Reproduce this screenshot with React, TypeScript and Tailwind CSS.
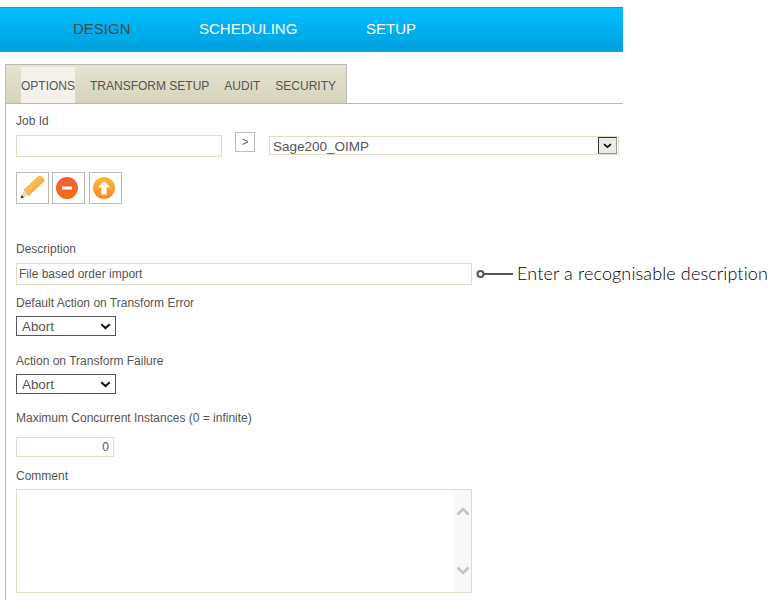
import React from 'react';

const Chevron = ({ size }: { size: number }) => (
  <svg width={size} height={size * 0.62} viewBox="0 0 13 8" className="block">
    <path d="M1.5 1.5 L6.5 6 L11.5 1.5" fill="none" stroke="#111" strokeWidth="2.4" />
  </svg>
);

const PencilIcon = () => (
  <svg width="30" height="30" viewBox="0 0 30 30">
    <defs>
      <linearGradient id="pencilBody" x1="0" y1="0" x2="1" y2="1">
        <stop offset="0" stopColor="#fdd98a" />
        <stop offset="1" stopColor="#f0981c" />
      </linearGradient>
    </defs>
    <path d="M6 17 L20.5 3.5 Q21.8 2.6 23 3.6 L25.6 6.2 Q26.6 7.4 25.6 8.6 L10.5 22.5 Z" fill="url(#pencilBody)" stroke="#ee9a22" strokeWidth="0.8" />
    <path d="M6 17 L10.5 22.5 L2.5 25.5 Z" fill="#f3dcb4" />
    <path d="M3.7 22 L6 24.2 L2.5 25.5 Z" fill="#2b2b2b" />
  </svg>
);

const MinusIcon = () => (
  <svg width="24" height="24" viewBox="0 0 24 24">
    <defs>
      <linearGradient id="minusBg" x1="0" y1="0" x2="0" y2="1">
        <stop offset="0" stopColor="#ee6040" />
        <stop offset="1" stopColor="#fc6a10" />
      </linearGradient>
    </defs>
    <circle cx="12" cy="12" r="11" fill="url(#minusBg)" />
    <rect x="7" y="10.5" width="10" height="3" fill="#fff" />
  </svg>
);

const UpIcon = () => (
  <svg width="24" height="24" viewBox="0 0 24 24">
    <defs>
      <linearGradient id="upBg" x1="0" y1="0" x2="0" y2="1">
        <stop offset="0" stopColor="#fdbb30" />
        <stop offset="1" stopColor="#f88a2c" />
      </linearGradient>
    </defs>
    <circle cx="12" cy="12" r="11" fill="url(#upBg)" />
    <path d="M12 5 L18 11.5 H14.5 V18.5 H9.5 V11.5 H6 Z" fill="#fff" />
  </svg>
);

const AbortSelect = () => (
  <div className="relative w-[100px] h-[20px]">
    <select className="block w-full h-full appearance-none border border-[#555] bg-white pl-[5px] text-[13.33px] text-[#555] outline-none">
      <option>Abort</option>
    </select>
    <div className="absolute right-[5px] top-[7px] pointer-events-none">
      <Chevron size={11} />
    </div>
  </div>
);

const Field = ({ children }: { children: React.ReactNode }) => (
  <label className="block h-[14px] leading-[14px] text-[12px] text-[#555]">{children}</label>
);

const tabs = ['TRANSFORM SETUP', 'AUDIT', 'SECURITY'];

export default function App() {
  return (
    <div className="w-[780px] h-[610px] overflow-hidden bg-white pt-[7px] font-['Liberation_Sans',Arial,sans-serif]">
      <nav className="w-[623px] h-[45px] flex items-center pl-[73px] pb-[2px] text-[15px] border-t border-[#0a9fd8] bg-gradient-to-b from-[#00bfff] to-[#009fdc]">
        <span className="w-[126px] text-[#3c4a50]">DESIGN</span>
        <span className="w-[167px] text-white">SCHEDULING</span>
        <span className="text-white">SETUP</span>
      </nav>

      <div className="h-[536px] mt-[12px] border-l border-[#b9b9b9] ml-[5px] w-[618px]">
        <div className="w-full border-b border-[#b9b9b9]">
          <div className="w-[342px] h-[39px] -ml-px flex items-end pl-[15px] border border-b-0 border-[#b9b9b9] bg-gradient-to-b from-[#e5e3d2] to-[#d6d3bd] text-[12px] text-[#555]">
            <span className="w-[54px] h-[36px] pt-[1px] flex items-center bg-[#f3f1e9] whitespace-nowrap">OPTIONS</span>
            {tabs.map((tab) => (
              <span key={tab} className="h-[36px] pt-[1px] flex items-center ml-[15px] whitespace-nowrap">{tab}</span>
            ))}
          </div>
        </div>

        <div className="pl-[10px] pt-[10px]">
          <Field>Job Id</Field>
          <div className="flex items-start mt-[7px]">
            <input className="w-[206px] h-[22px] border border-[#e0dcc6] outline-none" />
            <button className="w-[20px] h-[20px] mt-[-3px] ml-[13px] border border-[#bcbcbc] text-[12px] text-[#666] flex items-center justify-center">&gt;</button>
            <div className="relative w-[350px] h-[19px] ml-[14px] mt-[1px]">
              <select className="block w-full h-full appearance-none border border-[#e0dcc6] bg-white pl-[3px] text-[13.5px] text-[#555] outline-none">
                <option>Sage200_OIMP</option>
              </select>
              <div className="absolute right-[2px] top-[1px] w-[19px] h-[17px] border border-[#333] border-r-[#999] border-b-[#999] bg-[#ecebe6] flex items-center justify-center pointer-events-none">
                <Chevron size={9} />
              </div>
            </div>
          </div>

          <div className="flex gap-[3px] mt-[15px]">
            <div className="w-[33px] h-[32px] border border-[#b9b9b9] flex items-center justify-center"><PencilIcon /></div>
            <div className="w-[33px] h-[32px] border border-[#b9b9b9] flex items-center justify-center pr-[3px]"><MinusIcon /></div>
            <div className="w-[33px] h-[32px] border border-[#b9b9b9] flex items-center justify-center pr-[3px] ml-[1px]"><UpIcon /></div>
          </div>

          <div className="mt-[38px]"><Field>Description</Field></div>
          <div className="flex items-center mt-[7px] w-[760px]">
            <input
              defaultValue="File based order import"
              className="w-[456px] h-[22px] border border-[#e0dcc6] pl-[2px] text-[12px] text-[#555] outline-none"
            />
            <svg width="37" height="10" viewBox="0 0 37 10" className="ml-[4px] shrink-0">
              <circle cx="4.5" cy="5" r="3" fill="none" stroke="#555" strokeWidth="2" />
              <rect x="7" y="4" width="30" height="2" fill="#555" />
            </svg>
            <span className="ml-[4px] -mt-[3px] text-[18px] leading-[20px] tracking-[0.13px] font-light font-['Lato',sans-serif] text-[#000] whitespace-nowrap">Enter a recognisable description</span>
          </div>

          <div className="mt-[11px]"><Field>Default Action on Transform Error</Field></div>
          <div className="mt-[6px]"><AbortSelect /></div>

          <div className="mt-[18px]"><Field>Action on Transform Failure</Field></div>
          <div className="mt-[6px]"><AbortSelect /></div>

          <div className="mt-[17px]"><Field>Maximum Concurrent Instances (0 = infinite)</Field></div>
          <input
            defaultValue="0"
            className="block mt-[12px] w-[98px] h-[20px] border border-[#e0dcc6] pr-[4px] text-right text-[12px] text-[#555] outline-none"
          />

          <div className="mt-[12px]"><Field>Comment</Field></div>
          <div className="mt-[6px] w-[456px] h-[104px] border border-[#e0dcc6] flex">
            <textarea className="flex-1 resize-none outline-none" />
            <div className="w-[17px] bg-[#f8f8f8] flex flex-col items-center justify-between py-[17px]">
              <svg width="14" height="9" viewBox="0 0 14 9"><path d="M1.5 7.5 L7 2 L12.5 7.5" fill="none" stroke="#c4c4c4" strokeWidth="2.6" /></svg>
              <svg width="14" height="9" viewBox="0 0 14 9"><path d="M1.5 1.5 L7 7 L12.5 1.5" fill="none" stroke="#c4c4c4" strokeWidth="2.6" /></svg>
            </div>
          </div>
        </div>
      </div>
    </div>
  );
}
